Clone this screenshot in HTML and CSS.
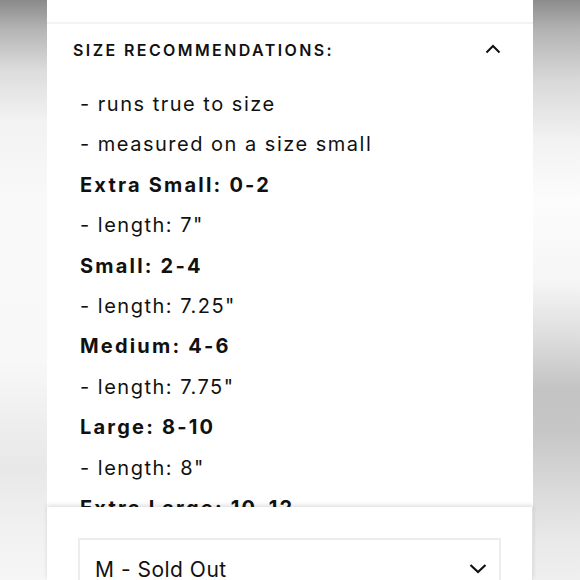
FILE: index.html
```html
<!DOCTYPE html>
<html>
<head>
<meta charset="utf-8">
<link rel="stylesheet" href="styles.css">
</head>
<body>
<div class="page">
  <div class="side side-left"></div>
  <main class="panel">
    <div class="topbar"></div>
    <div class="acc-head">
      <span class="acc-title">SIZE RECOMMENDATIONS:</span>
      <svg class="chev" width="16" height="10" viewBox="0 0 16 10"><path d="M1.5 8.5 L8 2 L14.5 8.5" fill="none" stroke="#111" stroke-width="2"/></svg>
    </div>
    <div class="acc-body">
      <p class="line">- runs true to size</p>
      <p class="line">- measured on a size small</p>
      <p class="line bold">Extra Small: 0-2</p>
      <p class="line">- length: 7"</p>
      <p class="line bold">Small: 2-4</p>
      <p class="line">- length: 7.25"</p>
      <p class="line bold">Medium: 4-6</p>
      <p class="line">- length: 7.75"</p>
      <p class="line bold">Large: 8-10</p>
      <p class="line">- length: 8"</p>
      <p class="line bold">Extra Large: 10-12</p>
    </div>
    <div class="footer">
      <div class="select">
        <span class="select-text">M - Sold Out</span>
        <svg class="chev-down" width="18" height="11" viewBox="0 0 18 11"><path d="M1.5 2 L9 9 L16.5 2" fill="none" stroke="#111" stroke-width="2.2"/></svg>
      </div>
    </div>
  </main>
  <div class="side side-right"></div>
</div>
</body>
</html>
```
FILE: styles.css
```css
html, body {
  margin: 0;
  padding: 0;
  width: 580px;
  height: 580px;
  overflow: hidden;
  background: #fff;
}
.page {
  display: flex;
  width: 580px;
  height: 580px;
  font-family: Inter, "Open Sans", sans-serif;
  color: #111;
}
.side {
  width: 47px;
  flex: none;
}
.side-left {
  background: linear-gradient(to bottom, #8a8a8a 0px, #b5b5b5 30px, #dcdcdc 70px, #f2f2f2 120px, #f9f9f9 200px, #f8f8f8 360px, #ededed 430px, #e8e8e8 470px, #f1f1f1 530px, #f6f6f6 580px);
}
.side-right {
  background: linear-gradient(to bottom, #8c8c8c 0px, #b3b3b3 30px, #d8d8d8 80px, #f2f2f2 140px, #fcfcfc 200px, #f6f6f6 280px, #dcdcdc 340px, #c3c3c3 390px, #c6c6c6 430px, #dadada 490px, #e9e9e9 540px, #efefef 580px);
}
.panel {
  width: 486px;
  flex: none;
  display: flex;
  flex-direction: column;
  background: #fff;
  height: 580px;
}
.topbar {
  height: 22px;
  flex: none;
  border-bottom: 2px solid #f3f3f3;
}
.acc-head {
  flex: none;
  height: 52px;
  display: flex;
  align-items: center;
  justify-content: space-between;
  padding: 0 32px 0 26px;
}
.acc-title {
  font-size: 16px;
  font-weight: 600;
  letter-spacing: 2.4px;
  margin-top: 0;
}
.chev {
  display: block;
  margin-top: -3px;
}
.acc-body {
  flex: 1;
  overflow: hidden;
  padding: 8px 33px 0;
}
.line {
  margin: 0;
  font-size: 20px;
  line-height: 40.4px;
  letter-spacing: 1.5px;
  white-space: nowrap;
}
.bold {
  font-weight: 700;
  letter-spacing: 2.2px;
}
.footer {
  flex: none;
  height: 73px;
  box-sizing: border-box;
  padding: 31px 31px 0;
  background: #fff;
  box-shadow: 0 -2px 4px rgba(0,0,0,0.12);
  border-right: 1px solid #e2e2e2;
  position: relative;
}
.select {
  height: 60px;
  border: 2px solid #ededed;
  box-sizing: border-box;
  display: flex;
  align-items: center;
  justify-content: space-between;
  padding: 0 12px 0 15px;
}
.select-text {
  font-size: 21px;
  letter-spacing: 0.5px;
  margin-top: 2px;
}
.chev-down {
  display: block;
  margin-top: 1px;
}
```
